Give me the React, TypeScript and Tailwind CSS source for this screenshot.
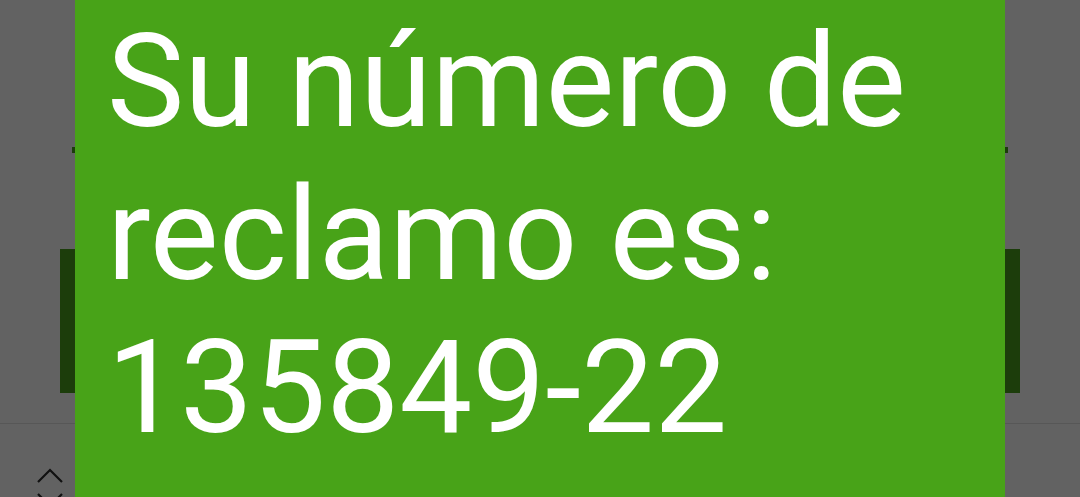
export default function App() {
  return (
    <div className="relative h-[497px] w-[1080px] overflow-hidden bg-[#626262] font-['Roboto',sans-serif]">
      {/* dimmed page behind the dialog */}
      <div className="flex h-full flex-col">
        <div className="h-[147px] shrink-0" />
        <div className="mx-[72px] h-[6px] shrink-0 bg-[#1c3d0b]" />
        <div className="h-[96px] shrink-0" />
        <div className="mx-[60px] h-[144px] shrink-0 bg-[#1c3d0b]" />
        <div className="h-[30px] shrink-0" />
        <div className="flex min-h-0 flex-1 flex-col overflow-hidden border-t border-[#575757]">
          <div className="ml-[36px] mt-[44px] flex w-[28px] shrink-0 flex-col items-center gap-[8px]">
            <svg width="28" height="16" viewBox="0 0 28 16" fill="none" stroke="#111" strokeWidth="2.2">
              <path d="M2 14 14 2l12 12" />
            </svg>
            <svg width="28" height="16" viewBox="0 0 28 16" fill="none" stroke="#111" strokeWidth="2.2">
              <path d="M2 2l12 12L26 2" />
            </svg>
          </div>
        </div>
      </div>

      {/* dialog */}
      <div className="absolute left-[75px] top-0 h-full w-[930px] bg-[#48a318] px-[32px] pt-[5px]">
        <p className="text-[130px] leading-[153px] text-white">
          Su número de reclamo es: 135849-22
        </p>
      </div>
    </div>
  );
}
